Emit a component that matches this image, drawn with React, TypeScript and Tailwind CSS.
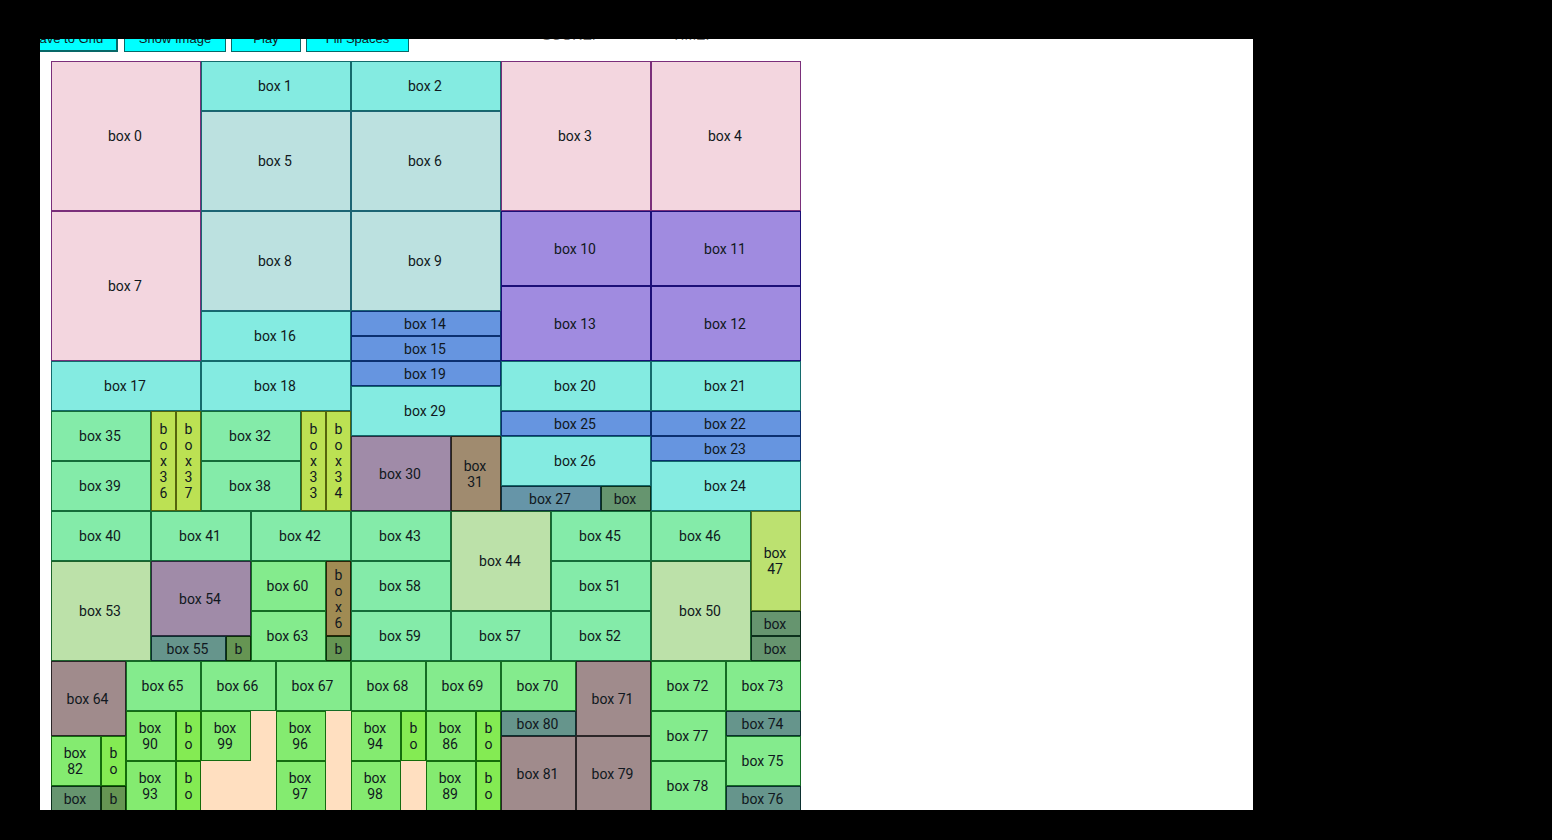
const FILL = {
  pink: 'bg-[#f3d6df] border-[#7a2f7a]',
  cyan: 'bg-[#84ebe1] border-[#146a6c]',
  pale: 'bg-[#bce1e0] border-[#1c6474]',
  violet: 'bg-[#a08be0] border-[#1c0f78]',
  blue: 'bg-[#6695e0] border-[#0b3070]',
  mint: 'bg-[#84eba9] border-[#146c3a]',
  leaf: 'bg-[#84eb8d] border-[#146c24]',
  grass: 'bg-[#84eb70] border-[#146c10]',
  lime: 'bg-[#84eb53] border-[#146c08]',
  olive: 'bg-[#bce153] border-[#54640c]',
  moss: 'bg-[#bce170] border-[#54701c]',
  sage: 'bg-[#bce1a9] border-[#1c642c]',
  plum: 'bg-[#a08ba8] border-[#302c40]',
  taupe: 'bg-[#a08b8c] border-[#2c2628]',
  tan: 'bg-[#a08b6f] border-[#2c2418]',
  brown: 'bg-[#a08b53] border-[#2c2408]',
  steel: 'bg-[#6695a8] border-[#0c3040]',
  slate: 'bg-[#66958c] border-[#0c3030]',
  fern: 'bg-[#66956f] border-[#0c301c]',
  pine: 'bg-[#669553] border-[#0c3008]',
} as const;

type Box = [id: number, col: number, row: number, cols: number, rows: number, fill: keyof typeof FILL];

// Column, row and spans are counted in grid units, starting at zero.
const BOXES: Box[] = [
  [0, 0, 0, 6, 6, 'pink'], [1, 6, 0, 6, 2, 'cyan'], [2, 12, 0, 6, 2, 'cyan'],
  [3, 18, 0, 6, 6, 'pink'], [4, 24, 0, 6, 6, 'pink'], [5, 6, 2, 6, 4, 'pale'],
  [6, 12, 2, 6, 4, 'pale'], [7, 0, 6, 6, 6, 'pink'], [8, 6, 6, 6, 4, 'pale'],
  [9, 12, 6, 6, 4, 'pale'], [10, 18, 6, 6, 3, 'violet'], [11, 24, 6, 6, 3, 'violet'],
  [13, 18, 9, 6, 3, 'violet'], [12, 24, 9, 6, 3, 'violet'], [14, 12, 10, 6, 1, 'blue'],
  [15, 12, 11, 6, 1, 'blue'], [16, 6, 10, 6, 2, 'cyan'], [17, 0, 12, 6, 2, 'cyan'],
  [18, 6, 12, 6, 2, 'cyan'], [19, 12, 12, 6, 1, 'blue'], [20, 18, 12, 6, 2, 'cyan'],
  [21, 24, 12, 6, 2, 'cyan'], [22, 24, 14, 6, 1, 'blue'], [23, 24, 15, 6, 1, 'blue'],
  [24, 24, 16, 6, 2, 'cyan'], [25, 18, 14, 6, 1, 'blue'], [26, 18, 15, 6, 2, 'cyan'],
  [27, 18, 17, 4, 1, 'steel'], [28, 22, 17, 2, 1, 'fern'], [29, 12, 13, 6, 2, 'cyan'],
  [30, 12, 15, 4, 3, 'plum'], [31, 16, 15, 2, 3, 'tan'], [32, 6, 14, 4, 2, 'mint'],
  [33, 10, 14, 1, 4, 'olive'], [34, 11, 14, 1, 4, 'olive'], [35, 0, 14, 4, 2, 'mint'],
  [36, 4, 14, 1, 4, 'olive'], [37, 5, 14, 1, 4, 'olive'], [38, 6, 16, 4, 2, 'mint'],
  [39, 0, 16, 4, 2, 'mint'], [40, 0, 18, 4, 2, 'mint'], [41, 4, 18, 4, 2, 'mint'],
  [42, 8, 18, 4, 2, 'mint'], [43, 12, 18, 4, 2, 'mint'], [44, 16, 18, 4, 4, 'sage'],
  [45, 20, 18, 4, 2, 'mint'], [46, 24, 18, 4, 2, 'mint'], [47, 28, 18, 2, 4, 'moss'],
  [48, 28, 22, 2, 1, 'fern'], [49, 28, 23, 2, 1, 'fern'], [50, 24, 20, 4, 4, 'sage'],
  [51, 20, 20, 4, 2, 'mint'], [52, 20, 22, 4, 2, 'mint'], [53, 0, 20, 4, 4, 'sage'],
  [54, 4, 20, 4, 3, 'plum'], [55, 4, 23, 3, 1, 'slate'], [56, 7, 23, 1, 1, 'pine'],
  [57, 16, 22, 4, 2, 'mint'], [58, 12, 20, 4, 2, 'mint'], [59, 12, 22, 4, 2, 'mint'],
  [60, 8, 20, 3, 2, 'leaf'], [61, 11, 20, 1, 3, 'brown'], [62, 11, 23, 1, 1, 'pine'],
  [63, 8, 22, 3, 2, 'leaf'], [64, 0, 24, 3, 3, 'taupe'], [65, 3, 24, 3, 2, 'leaf'],
  [66, 6, 24, 3, 2, 'leaf'], [67, 9, 24, 3, 2, 'leaf'], [68, 12, 24, 3, 2, 'leaf'],
  [69, 15, 24, 3, 2, 'leaf'], [70, 18, 24, 3, 2, 'leaf'], [71, 21, 24, 3, 3, 'taupe'],
  [72, 24, 24, 3, 2, 'leaf'], [73, 27, 24, 3, 2, 'leaf'], [74, 27, 26, 3, 1, 'slate'],
  [75, 27, 27, 3, 2, 'leaf'], [76, 27, 29, 3, 1, 'slate'], [77, 24, 26, 3, 2, 'leaf'],
  [78, 24, 28, 3, 2, 'leaf'], [79, 21, 27, 3, 3, 'taupe'], [80, 18, 26, 3, 1, 'slate'],
  [81, 18, 27, 3, 3, 'taupe'], [82, 0, 27, 2, 2, 'grass'], [83, 2, 27, 1, 2, 'lime'],
  [84, 0, 29, 2, 1, 'fern'], [85, 2, 29, 1, 1, 'pine'], [86, 15, 26, 2, 2, 'grass'],
  [87, 17, 26, 1, 2, 'lime'], [89, 15, 28, 2, 2, 'grass'], [88, 17, 28, 1, 2, 'lime'],
  [90, 3, 26, 2, 2, 'grass'], [91, 5, 26, 1, 2, 'lime'], [93, 3, 28, 2, 2, 'grass'],
  [92, 5, 28, 1, 2, 'lime'], [94, 12, 26, 2, 2, 'grass'], [95, 14, 26, 1, 2, 'lime'],
  [98, 12, 28, 2, 2, 'grass'], [96, 9, 26, 2, 2, 'grass'], [97, 9, 28, 2, 2, 'grass'],
  [99, 6, 26, 2, 2, 'grass'],
];

function labelLines(id: number, cols: number, rows: number): string[] {
  if (cols === 1) {
    const room = rows === 1 ? 1 : rows === 2 ? 2 : rows === 3 ? 4 : 5;
    return `box${id}`.split('').slice(0, room);
  }
  if (cols === 2) return rows === 1 ? ['box'] : ['box', String(id)];
  return [`box ${id}`];
}

const BUTTON = 'h-6 border-[#086868] bg-[#00ffff] pb-0.5 text-[13px] leading-4';

export default function App() {
  return (
    <div className="min-h-screen bg-black pt-[39px] pr-[299px] pb-[30px] pl-10 font-['Roboto',sans-serif] text-[#101820]">
      <main className="overflow-hidden bg-white">
        <header className="-mt-[11px] flex items-start font-['Liberation_Sans',Arial,sans-serif]">
          <button className={`${BUTTON} -ml-6 w-[102px] border-2`}>Save to Grid</button>
          <button className={`${BUTTON} ml-1.5 w-[102px] border`}>Show Image</button>
          <button className={`${BUTTON} ml-[5px] w-[70px] border`}>Play</button>
          <button className={`${BUTTON} ml-[5px] w-[103px] border`}>Fill Spaces</button>
          <p className="-mt-px ml-[133px] w-[130px] text-sm leading-4 text-[#777]">SCORE:</p>
          <p className="-mt-px text-sm leading-4 text-[#777]">TIME:</p>
        </header>
        <section className="mt-[9px] -mb-px ml-[11px] grid w-max grid-cols-[repeat(30,25px)] grid-rows-[repeat(30,25px)] bg-[#ffdfc0]">
          {BOXES.map(([id, col, row, cols, rows, fill]) => (
            <div
              key={id}
              className={`flex flex-col items-center justify-center overflow-hidden border text-center text-sm leading-4 ${cols > 1 ? 'pr-0.5' : ''} ${FILL[fill]}`}
              style={{ gridColumn: `${col + 1} / span ${cols}`, gridRow: `${row + 1} / span ${rows}` }}
            >
              {labelLines(id, cols, rows).map((line, i) => (
                <span key={i}>{line}</span>
              ))}
            </div>
          ))}
        </section>
      </main>
    </div>
  );
}
